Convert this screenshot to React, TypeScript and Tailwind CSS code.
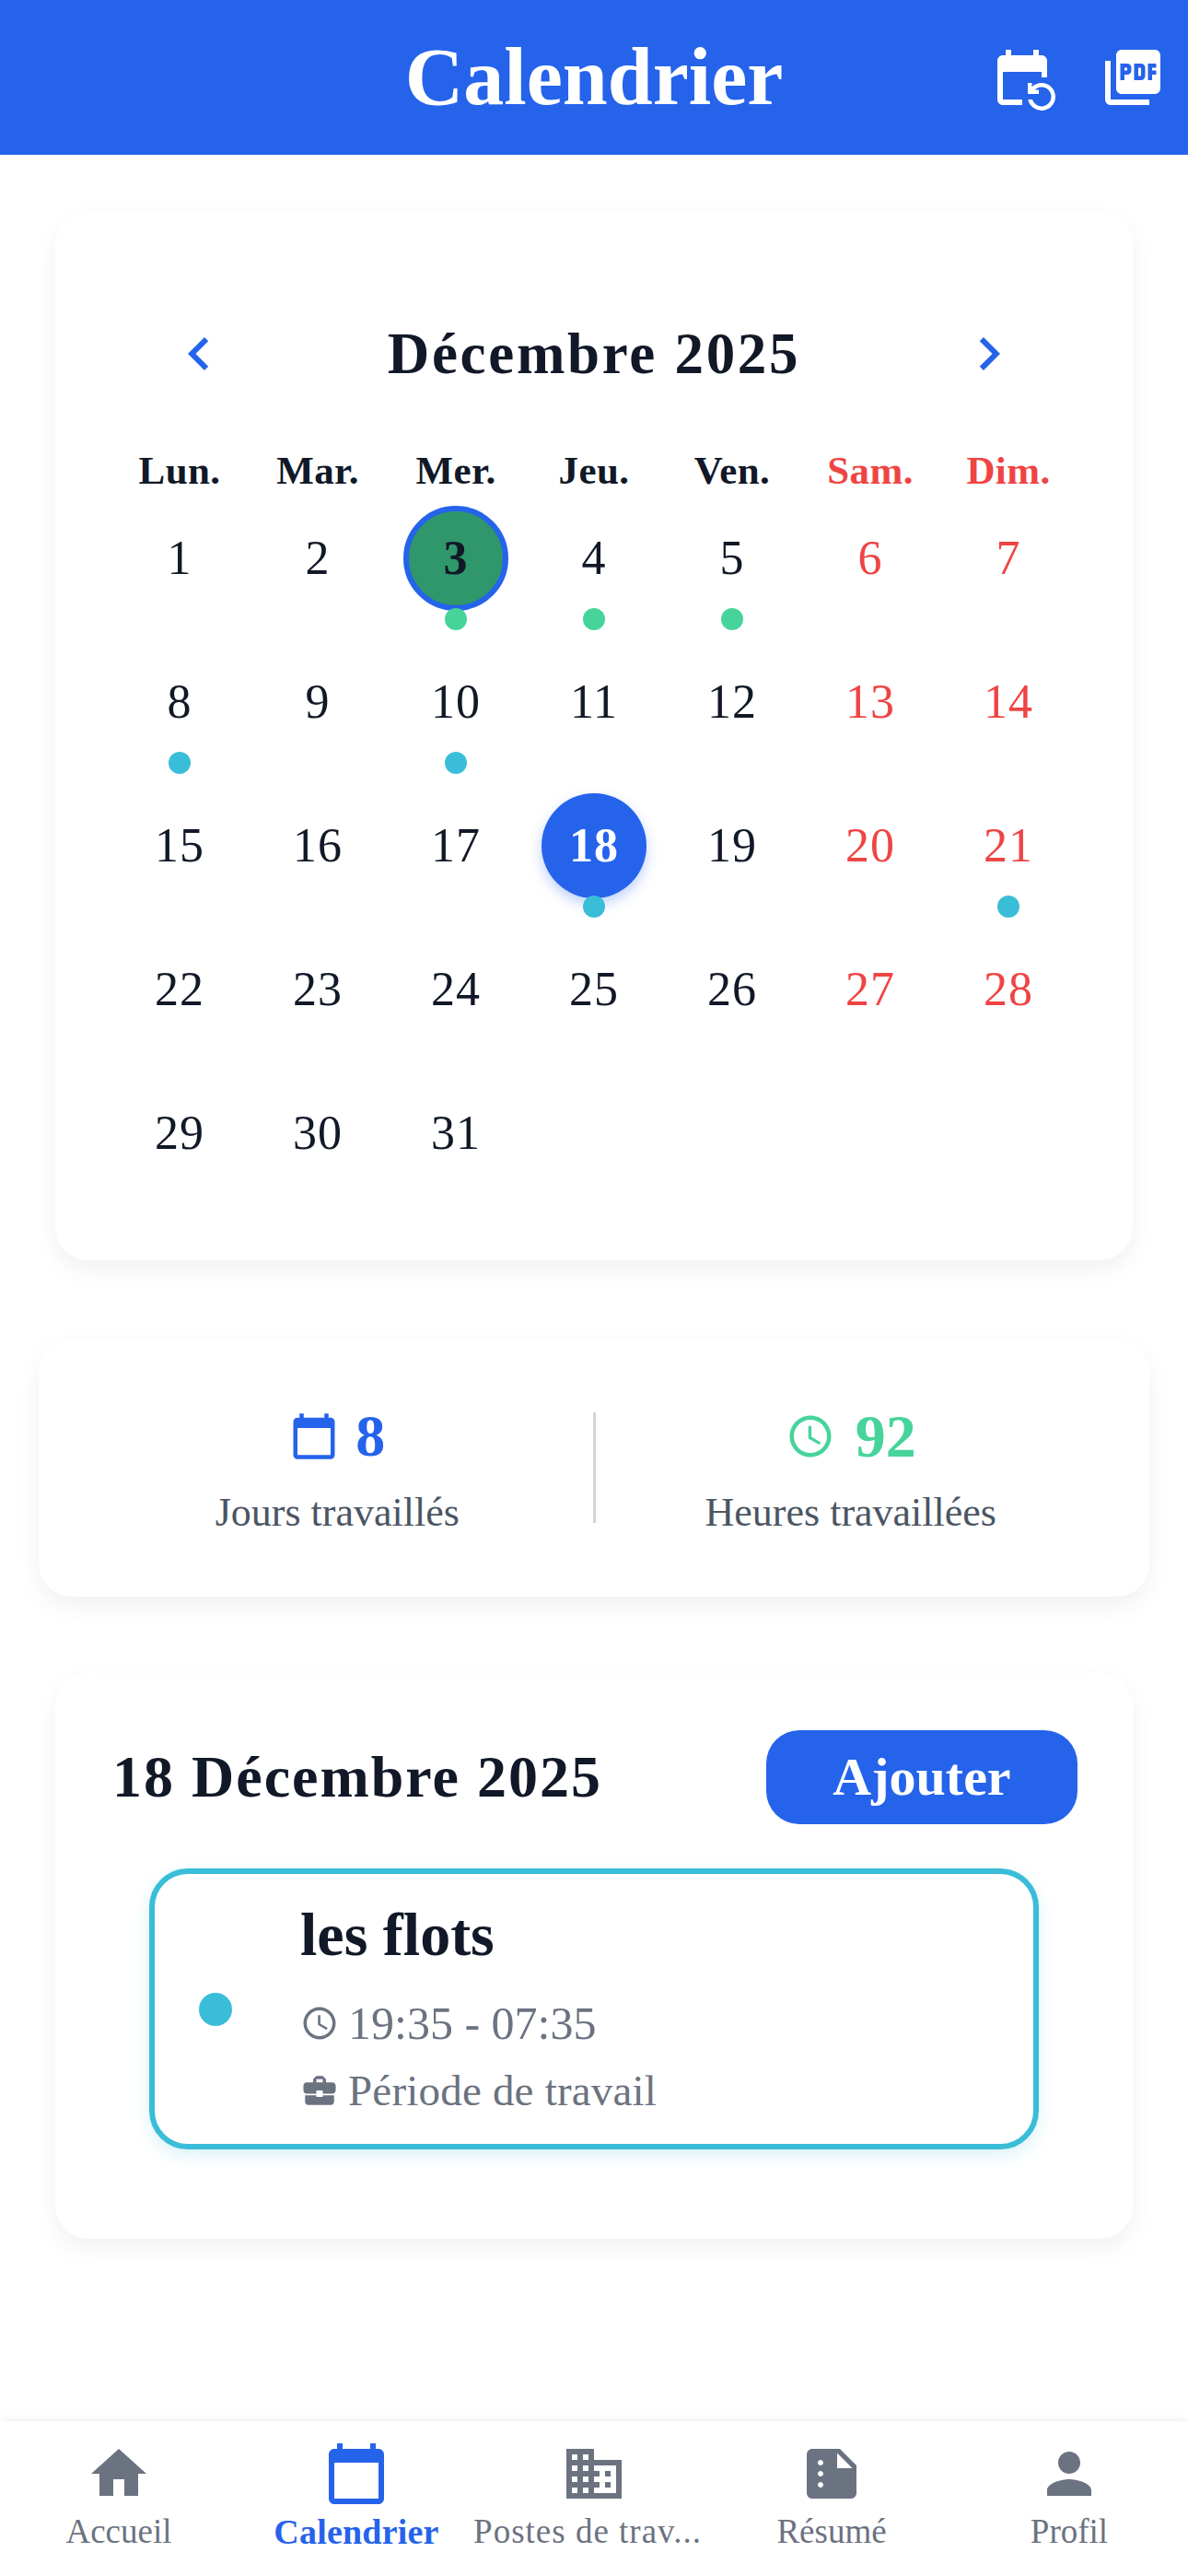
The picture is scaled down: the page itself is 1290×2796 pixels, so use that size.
import { MdHome, MdCalendarToday, MdDomain, MdSummarize, MdPerson, MdAccessTime, MdBusinessCenter, MdChevronLeft, MdChevronRight, MdEventRepeat, MdPictureAsPdf } from "react-icons/md";

const weekdays = ["Lun.", "Mar.", "Mer.", "Jeu.", "Ven.", "Sam.", "Dim."];
const greenDays = [3, 4, 5];
const cyanDays = [8, 10, 18, 21];
const days = Array.from({ length: 31 }, (_, i) => i + 1);

function DayCell({ day, index }: { day: number; index: number }) {
  const weekend = index % 7 >= 5;
  const marked = day === 3;
  const selected = day === 18;
  let tone = "text-[#111827]";
  if (weekend) tone = "text-[#ef4444]";
  if (selected) tone = "text-white font-bold bg-[#2563eb] shadow-[0_6px_14px_rgba(37,99,235,0.3)]";
  if (marked) tone = "text-[#111827] font-bold bg-[#30966b] border-[6px] border-[#2563eb]";
  return (
    <div className="flex h-[156px] w-[150px] flex-col items-center">
      <div className={`flex h-[114px] w-[114px] items-center justify-center rounded-full text-[52px] leading-none tracking-[1px] ${tone}`}>{day}</div>
      {greenDays.includes(day) && <div className="relative -mt-[3px] h-[24px] w-[24px] rounded-full bg-[#46d49b]" />}
      {cyanDays.includes(day) && <div className="relative -mt-[3px] h-[24px] w-[24px] rounded-full bg-[#3abdd8]" />}
    </div>
  );
}

function Tab({ label, active, children, wide }: { label: string; active?: boolean; children: React.ReactNode; wide?: boolean }) {
  return (
    <div className={`flex w-[258px] flex-col items-center ${active ? "text-[#2563eb]" : "text-[#6b7280]"}`}>
      {children}
      <span className={`-mt-[1px] whitespace-nowrap leading-[56px] ${active ? "text-[38px] font-bold tracking-[0.2px]" : "text-[37px]"} ${wide ? "pr-[14px] tracking-[1px]" : ""}`}>{label}</span>
    </div>
  );
}

export default function App() {
  return (
    <div className="flex h-[2796px] w-[1290px] flex-col overflow-hidden bg-white font-['Liberation_Serif',serif] text-[#111827]">
      <header className="grid h-[168px] shrink-0 grid-cols-[1fr_auto_1fr] items-center bg-[#2563eb] text-white">
        <div />
        <h1 className="text-[88px] font-bold leading-none">Calendrier</h1>
        <div className="flex justify-end gap-[48px] pr-[24px]">
          <MdEventRepeat size={72} />
          <MdPictureAsPdf size={72} />
        </div>
      </header>

      <section className="mx-[60px] mt-[62px] rounded-[36px] bg-white pb-[39px] pt-[118px] shadow-[0_10px_26px_rgba(0,0,0,0.06)]">
        <div className="flex h-[72px] items-center justify-between px-[120px] text-[#2563eb]">
          <MdChevronLeft size={72} />
          <h2 className="text-[63px] font-bold leading-none tracking-[2.7px] text-[#111827]">Décembre 2025</h2>
          <MdChevronRight size={72} />
        </div>
        <div className="mx-[60px] mt-[62px] grid grid-cols-7">
          {weekdays.map((w, i) => (
            <div key={w} className={`h-[67px] pt-[3px] text-center text-[43px] font-bold leading-[52px] tracking-[0.4px] ${i >= 5 ? "text-[#ef4444]" : "text-[#111827]"}`}>{w}</div>
          ))}
          {days.map((d, i) => (
            <DayCell key={d} day={d} index={i} />
          ))}
        </div>
      </section>

      <section className="mx-[42px] mt-[85px] flex h-[280px] items-center rounded-[36px] bg-white px-[47px] pt-[11px] shadow-[0_10px_26px_rgba(0,0,0,0.06)]">
        <div className="flex flex-1 flex-col items-center">
          <div className="flex items-center gap-[18px]">
            <MdCalendarToday size={54} className="text-[#2563eb]" />
            <span className="text-[64px] font-bold leading-[72px] text-[#2563eb]">8</span>
          </div>
          <span className="mt-[14px] text-[44px] leading-[66px] text-[#4b5563]">Jours travaillés</span>
        </div>
        <div className="-mt-[11px] h-[120px] w-[3px] bg-[#d1d5db]" />
        <div className="flex flex-1 flex-col items-center">
          <div className="flex items-center gap-[22px]">
            <MdAccessTime size={54} className="text-[#46d49b]" />
            <span className="text-[66px] font-bold leading-[72px] text-[#46d49b]">92</span>
          </div>
          <span className="mt-[14px] text-[44px] leading-[66px] text-[#4b5563]">Heures travaillées</span>
        </div>
      </section>

      <section className="mx-[60px] mt-[83px] h-[614px] rounded-[36px] bg-white pl-[62px] pr-[60px] pt-[62px] shadow-[0_10px_26px_rgba(0,0,0,0.06)]">
        <div className="flex items-center justify-between">
          <h3 className="text-[64px] font-bold leading-none tracking-[2px]">18 Décembre 2025</h3>
          <button className="h-[102px] w-[338px] rounded-[36px] bg-[#2563eb] text-[58px] font-bold leading-none text-white">Ajouter</button>
        </div>
        <div className="ml-[40px] mr-[42px] mt-[48px] flex h-[305px] items-center rounded-[42px] border-[6px] border-[#3abdd8] bg-white pl-[48px] shadow-[0_6px_18px_rgba(58,189,216,0.2)]">
          <div className="h-[36px] w-[36px] shrink-0 rounded-full bg-[#3abdd8]" />
          <div className="ml-[74px] flex flex-col">
            <span className="text-[66px] font-bold leading-[78px]">les flots</span>
            <div className="mt-[26px] flex items-center gap-[10px] text-[#6b7280]">
              <MdAccessTime size={42} />
              <span className="text-[50px] leading-[62px]">19:35 - 07:35</span>
            </div>
            <div className="mt-[11px] flex items-center gap-[10px] text-[#6b7280]">
              <MdBusinessCenter size={42} />
              <span className="text-[47px] leading-[62px] tracking-[0.2px]">Période de travail</span>
            </div>
          </div>
        </div>
      </section>

      <nav className="mt-auto flex h-[168px] shrink-0 bg-white pt-[21px] shadow-[0_-3px_8px_rgba(0,0,0,0.05)]">
        <Tab label="Accueil"><MdHome size={72} /></Tab>
        <Tab label="Calendrier" active><MdCalendarToday size={72} /></Tab>
        <Tab label="Postes de trav..." wide><MdDomain size={72} /></Tab>
        <Tab label="Résumé"><MdSummarize size={72} /></Tab>
        <Tab label="Profil"><MdPerson size={72} /></Tab>
      </nav>
    </div>
  );
}
